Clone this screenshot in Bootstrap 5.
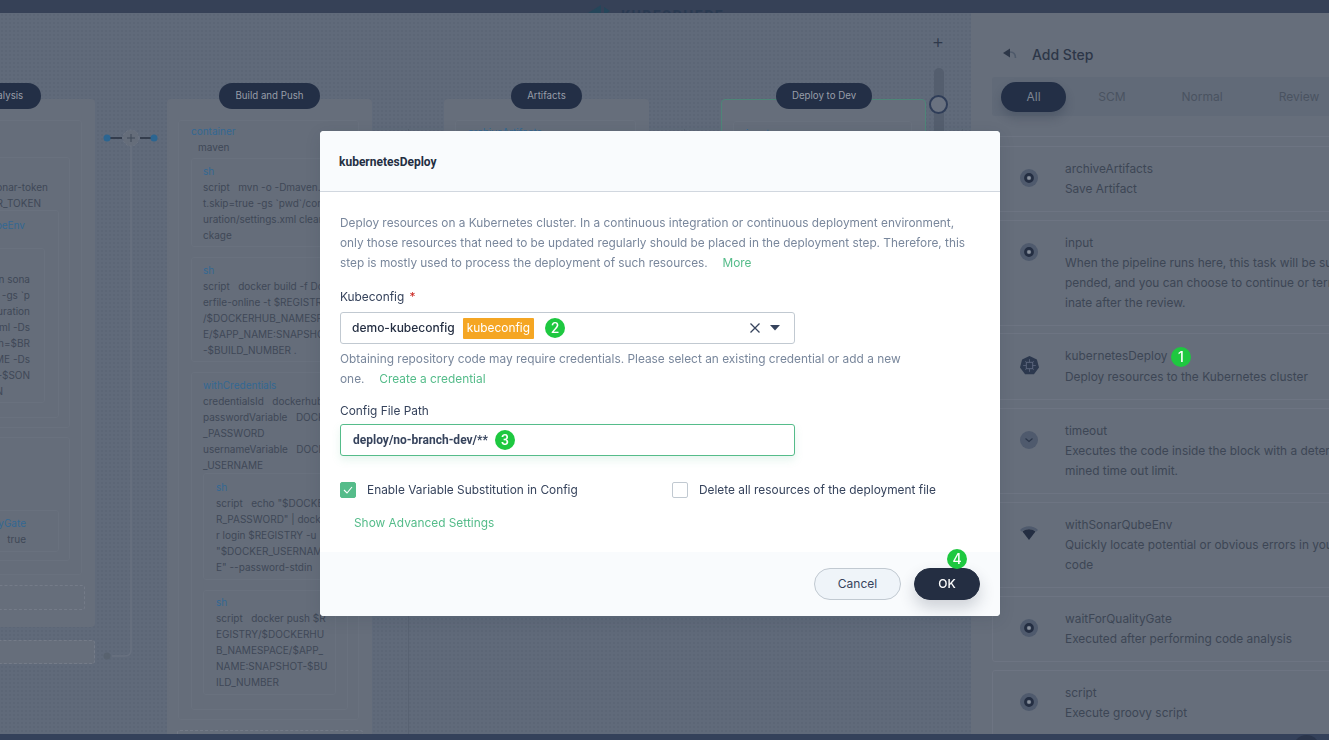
<!DOCTYPE html>
<html lang="en"><head><meta charset="utf-8"><title>kubernetesDeploy</title>
<link href="https://cdn.jsdelivr.net/npm/bootstrap@5.3.0/dist/css/bootstrap.min.css" rel="stylesheet">
<style>
html,body{height:100%;overflow:hidden}
body{font-family:Inter,Roboto,"Liberation Sans",sans-serif;font-size:11.88px;color:#36435c;background:#616b7a}
.app{height:740px}
.bar-top{height:13px;background:#364157;overflow:hidden;flex:none;gap:10px;padding-left:588px}
.bar-top svg{margin-top:5px;flex:none}
.logo-word{font-family:Roboto,sans-serif;font-size:14px;font-weight:700;letter-spacing:1.6px;line-height:16px;margin-top:8px;color:#293950}
.bar-bot{height:6px;background:#34415a;overflow:hidden;flex:none;padding-right:9px}
.bar-bot i{display:block;width:27px;height:27px;border-radius:50%;background:#2a354b;margin-top:1px}
.stage{flex:1 1 auto;min-height:0;overflow:hidden}
.canvas{width:971px;flex:none;background-color:#606a7a;background-image:radial-gradient(#5c6676 1px,transparent 1px);background-size:4px 4px}
.pipe{position:absolute;top:86px;width:205px}
.pipe-a{left:-110px}.pipe-b{left:167px}.pipe-c{left:444px}.pipe-d{left:721px}
.pipe-shell{background:#666e7b;border-radius:4px;padding:21px 13px 0 11px;font-size:10px;line-height:16px;color:#3f4857;white-space:nowrap}
.pipe-a .pipe-shell{height:528px}
.pipe-b .pipe-shell{height:700px}
.pipe-c .pipe-shell{height:400px}
.pipe-d .pipe-shell{height:400px;border:1px solid #4e8578}
.pill{position:absolute;top:-16px;height:26px;border-radius:13px;background:#232f46;color:#979da8;font-size:9.7px;line-height:26px;text-align:center}
.pipe-a .pill{right:54px;width:101px}
.pipe-b .pill{left:52px;width:101px}
.pipe-c .pill{left:67px;width:71px}
.pipe-d .pill{left:55px;width:96px}
.blk{background:#656d7a;border:1px solid #69717e;border-radius:3px}
.blue{color:#336893}
.ind{padding-left:7px}
.a1{height:455px;padding-top:36px;text-align:right}
.a2{height:271px;margin-right:11px;padding-top:21px}
.a-line{padding-right:21px}
.a-line-b{padding-right:28px}
.a3{height:208px;margin-top:-1px;margin-right:10px;padding-top:6px}
.a-line-c{padding-right:33px}
.a4{height:155px;margin-top:15px;margin-right:13px;padding:22px 14px 0 0}
.a-n{padding-right:27px}
.a2b{height:124px;margin-top:9px;margin-right:11px;padding-top:72px}
.a3b{height:42px;margin-right:10px;padding:4px 32px 0 0}
.dash{border:1px dashed #747b88;border-radius:3px}
.a-dash1{height:25px;margin-top:10px;margin-right:-3px}
.a-dash2{height:24px;margin-top:13px;background:#666e7b}
.b1{padding:2px 0 9px 12px;width:181px}
.b2{width:157px;padding:4px 0 3px 11px;margin-top:10px}
.b2-first{margin-top:3px}
.b2-last{padding-bottom:14px}
.b3{width:133px;padding:3px 0 4px 12px;margin-top:10px}
.b3-first{margin-top:0;padding:5px 0 4px 12px}
.b-dash{height:40px;margin-top:10px;margin-left:-1px;width:186px}
.inner-top{padding:3px 0 0 12px}
.wire{position:absolute;left:100px;top:112px}
.tick{position:absolute;top:116px;width:1px;background:#586272}
.tick-a{left:408px;height:620px}.tick-b{left:684px;height:14px}.tick-c{left:962px;height:14px}
.zoomer{position:absolute;left:928px;top:19px;width:20px}
.zoom-plus{font-size:19px;line-height:20px;text-align:center;color:#2f394b;font-weight:300}
.zoom-track{width:10px;height:90px;margin:16px 0 0 6px;background:#545e6e;border-radius:5px}
.zoom-knob{position:absolute;left:1px;top:63px;width:19px;height:19px;border-radius:50%;border:2px solid #2f3d58;background:#6a7280}
.side{width:500px;flex:none;background:#666e7b;padding-left:21px}
.side-head{height:64px;gap:15px;padding:32px 0 0 11px;font-size:14px;font-weight:500;line-height:20px;color:#2d3748}
.side-head svg{margin-top:3px}
.side-tabs{height:39px;background:#616a78;border-radius:3px;padding:5px 9px;align-items:center}
.side-tabs a{display:block;text-align:center;color:#4a5361;text-decoration:none;height:30px;line-height:30px;font-size:12px;padding:0}
.side-tabs a.active{background:#232f46;color:#7d8593;border-radius:15px;box-shadow:0 6px 10px rgba(36,46,66,.25)}
.tab-a{width:65px}.tab-b{width:92px}.tab-c{width:88px}.tab-d{width:106px}
.step-list{margin-top:10px;height:608px;overflow:hidden}
.step-stub{height:11px;border-bottom:1px solid #6d7482;margin-bottom:9px}
.step{background:transparent;border:1px solid #6d7482;border-radius:3px;margin-bottom:8px;padding:12px 0 12px 72px;line-height:20px;color:#3d4655;white-space:nowrap;--bs-card-border-color:#6d7482}
.step-snug{margin-bottom:7px}
.step .ico{position:absolute;left:27px;top:22px}
.num{display:inline-flex;align-items:center;justify-content:center;width:20px;height:20px;border-radius:50%;background:#1ec840;color:#fff;font-size:14px;font-weight:500;line-height:1;vertical-align:middle}
.num-top{position:relative;z-index:2}
.modal-host{position:absolute;inset:0 9px 0 0;padding:0;z-index:1}
.modal-veil{position:absolute;inset:0 -9px 0 0;backdrop-filter:blur(.6px)}
.dlg{width:680px;height:485px;border:0;border-radius:4px;overflow:visible;background:#fff;box-shadow:0 4px 16px rgba(36,46,66,.12)}
.dlg .modal-header{height:61px;padding:2px 19px 0;background:#f9fbfd;border-bottom:1px solid #d1d7df;border-radius:4px 4px 0 0}
.dlg .modal-title{font-family:Roboto,sans-serif;font-size:12px;font-weight:700;color:#242e42;line-height:20px}
.dlg .modal-body{padding:21px 20px 0;flex:none;height:360px}
.muted-txt{color:#79879c;line-height:20px;margin:0}
.intro-txt{font-size:11.83px}
.glink{color:#55bc8a;text-decoration:none}
.gap-link{margin-left:11.500px}
.fld-label{margin:14px 0 5px;line-height:20px;color:#36435c;display:block}
.fld-label b{color:#ca2621;font-weight:400;margin-left:2px}
.fld-second{margin:12px 0 3px}
.pick{width:455px;height:32px;border:1px solid #c1c9d1;border-radius:3px;padding:0 11px;background:#fff;color:#242e42;line-height:30px}
.pick-name{font-size:12px;font-weight:500}
.tag-o{background:#f5a623;color:#fff;padding:0 4px;line-height:20px;height:21px;font-weight:400;margin-left:8px;border-radius:1px}
.pick .num{margin-left:11px}
.pick-tools{margin-left:auto;gap:9px;padding-right:3px}
.fld-help{margin-top:5px}
.path-in{font-family:Roboto,sans-serif;font-size:12px;width:455px;height:32px;border:1px solid #55bc8a;border-radius:3px;padding:0 12px;font-weight:700;color:#36435c;line-height:30px;box-shadow:0 4px 8px rgba(85,188,138,.15);background:#fff}
.path-in .num{margin-left:7px}
.checks{margin-top:26px;height:16px;line-height:16px}
.cb{width:16px;height:16px;margin:0 11px 0 0;flex:none;border:1px solid #c1c9d1;border-radius:2px;background:#fff}
.cb-on{background:#55bc8a;border-color:#55bc8a}
.chk-one{width:332px;color:#36435c}
.adv{margin:15px 0 0 14px;line-height:20px}
.dlg .modal-footer{height:64px;padding:16px 20px;background:#f9fbfd;border:0;gap:13px;border-radius:0 0 4px 4px;flex-wrap:nowrap;position:relative}
.dlg .modal-footer>*{margin:0}
.bt-cancel,.bt-ok{height:32px;border-radius:16px;font-size:12px;line-height:30px;padding:0}
.bt-cancel{width:87px;background:#eff4f9;border:1px solid #c1c9d1;color:#36435c;font-weight:400}
.bt-ok{width:66px;background:#242e42;border:1px solid #242e42;color:#fff;font-weight:500;box-shadow:0 8px 16px rgba(36,46,66,.2)}
.ok-wrap{position:relative}
.ok-wrap .num{position:absolute;left:33px;top:-19px}
</style></head>
<body>
<div class="app d-flex flex-column">
  <div class="bar-top d-flex">
    <svg width="23" height="12" viewBox="0 0 23 12"><path fill="#25465a" d="M0 8 13 0v12H0z"/><path fill="#25465a" d="M16 2l6 4-6 4z"/></svg>
    <div class="logo-word">KUBESPHERE</div>
  </div>
  <div class="stage d-flex position-relative">
    <div class="canvas position-relative">
      <div class="pipe pipe-a">
        <div class="pill"><span>Code Analysis</span></div>
        <div class="pipe-shell">
          <div class="blk a1">
            <div class="blk a2">
              <div class="a-line">secretText sonar-token</div>
              <div class="a-line-b">SONAR_TOKEN</div>
              <div class="blk a3">
                <div class="blue a-line-c">withSonarQubeEnv</div>
                <div class="blk a4">
                  <div>mvn sona</div><div>-gs `p</div><div>uration</div><div>ml -Ds</div><div>h=$BR</div><div>ME -Ds</div><div>-$SON</div><div class="a-n">N</div>
                </div>
              </div>
            </div>
            <div class="blk a2b">
              <div class="blk a3b"><div class="blue">waitForQualityGate</div><div>true</div></div>
            </div>
          </div>
          <div class="dash a-dash1"></div>
        </div>
        <div class="dash a-dash2"></div>
      </div>
      <div class="pipe pipe-b">
        <div class="pill">Build and Push</div>
        <div class="pipe-shell">
          <div class="blk b1">
            <div class="blue">container</div>
            <div class="ind">maven</div>
            <div class="blk b2 b2-first">
              <div class="blue">sh</div>
              <div>script&#160;&#160; mvn -o -Dmaven.test</div><div>t.skip=true -gs `pwd`/config</div><div>uration/settings.xml clean pa</div><div>ckage</div>
            </div>
            <div class="blk b2">
              <div class="blue">sh</div>
              <div>script&#160;&#160; docker build -f Dock</div><div>erfile-online -t $REGISTRY</div><div>/$DOCKERHUB_NAMESPAC</div><div>E/$APP_NAME:SNAPSHOT</div><div>-$BUILD_NUMBER .</div>
            </div>
            <div class="blk b2 b2-last">
              <div class="blue">withCredentials</div>
              <div>credentialsId&#160;&#160; dockerhub-id</div><div>passwordVariable&#160;&#160; DOCKER</div><div>_PASSWORD</div><div>usernameVariable&#160;&#160; DOCKER</div><div>_USERNAME</div>
              <div class="blk b3 b3-first">
                <div class="blue">sh</div>
                <div>script&#160;&#160; echo "$DOCKE</div><div>R_PASSWORD" | docke</div><div>r login $REGISTRY -u</div><div>"$DOCKER_USERNAM</div><div>E" --password-stdin</div>
              </div>
              <div class="blk b3">
                <div class="blue">sh</div>
                <div>script&#160;&#160; docker push $R</div><div>EGISTRY/$DOCKERHU</div><div>B_NAMESPACE/$APP_</div><div>NAME:SNAPSHOT-$BU</div><div>ILD_NUMBER</div>
              </div>
            </div>
          </div>
          <div class="dash b-dash"></div>
        </div>
      </div>
      <div class="pipe pipe-c">
        <div class="pill">Artifacts</div>
        <div class="pipe-shell"><div class="blk inner-top"><div class="blue">archiveArtifacts</div></div></div>
      </div>
      <div class="pipe pipe-d">
        <div class="pill">Deploy to Dev</div>
        <div class="pipe-shell"><div class="blk inner-top"><div class="blue">input</div></div></div>
      </div>
      <svg class="wire" width="60" height="540" viewBox="0 0 60 540" fill="none">
        <path d="M31 21V525q0 6-6 6H12" stroke="#687180" stroke-width="1.5"/>
        <circle cx="7" cy="531" r="3.5" fill="#58626f"/>
        <path d="M7 13H22M40 13H54" stroke="#262f3f" stroke-width="1.5"/>
        <circle cx="31" cy="13" r="8" fill="#656d7a" stroke="#6f7785" stroke-dasharray="2 2"/>
        <path d="M27 13h8M31 9v8" stroke="#3f4857" stroke-width="1"/>
        <circle cx="7" cy="13" r="3.5" fill="#2b6591"/><circle cx="54" cy="13" r="3.5" fill="#2b6591"/>
      </svg>
      <i class="tick tick-a"></i><i class="tick tick-b"></i><i class="tick tick-c"></i>
      <div class="zoomer">
        <div class="zoom-plus">+</div>
        <div class="zoom-track"></div>
        <div class="zoom-knob"></div>
      </div>
    </div>
    <div class="side">
      <div class="side-head d-flex">
        <svg width="14" height="14" viewBox="0 0 14 14"><path fill="#2d3748" d="M0 5 7 0.500v9z"/><path fill="none" stroke="#4f5a6b" stroke-width="1.600" d="M7 4c3.500 0 5.500 2 5.500 6"/></svg>
        <div>Add Step</div>
      </div>
      <div class="side-tabs nav d-flex flex-nowrap">
        <a class="active tab-a" href="#">All</a><a class="tab-b" href="#">SCM</a><a class="tab-c" href="#">Normal</a><a class="tab-d" href="#">Review</a>
      </div>
      <div class="step-list">
        <div class="step-stub"></div>
        <div class="card step">
          <svg class="ico" width="18" height="18" viewBox="0 0 18 18"><circle cx="9" cy="9" r="9" fill="#4f5a6d"/><circle cx="9" cy="9" r="3.6" fill="none" stroke="#242e42" stroke-width="2.6"/><circle cx="9" cy="9" r="1.8" fill="#8a919c"/></svg>
          <div>archiveArtifacts</div><div>Save Artifact</div>
        </div>
        <div class="card step step-snug">
          <svg class="ico" width="18" height="18" viewBox="0 0 18 18"><circle cx="9" cy="9" r="9" fill="#4f5a6d"/><circle cx="9" cy="9" r="3.6" fill="none" stroke="#242e42" stroke-width="2.6"/><circle cx="9" cy="9" r="1.8" fill="#8a919c"/></svg>
          <div>input</div><div>When the pipeline runs here, this task will be sus</div><div>pended, and you can choose to continue or term</div><div>inate after the review.</div>
        </div>
        <div class="card step">
          <svg class="ico" width="19" height="19" viewBox="0 0 18 18"><path fill="#2c384e" d="M9 0l7 3.400 2 7.500-4.800 6.400H4.800L0 10.900l2-7.500z"/><rect x="6" y="6" width="6" height="6" fill="none" stroke="#59637a" stroke-width="1"/><path stroke="#59637a" stroke-width=".8" d="M9 3v3M9 12v3M3 9h3M12 9h3M5 5l1.500 1.500M13 5l-1.500 1.500M5 13l1.500-1.500M13 13l-1.500-1.500"/></svg>
          <div>kubernetesDeploy <span class="num num-top">1</span></div><div>Deploy resources to the Kubernetes cluster</div>
        </div>
        <div class="card step">
          <svg class="ico" width="18" height="18" viewBox="0 0 18 18"><circle cx="9" cy="9" r="9" fill="#4f5a6d"/><path d="M5.500 7.500 9 10.500l3.500-3" fill="none" stroke="#2c374b" stroke-width="1.200"/></svg>
          <div>timeout</div><div>Executes the code inside the block with a deter</div><div>mined time out limit.</div>
        </div>
        <div class="card step">
          <svg class="ico" width="18" height="18" viewBox="0 0 18 18"><path fill="#4f5a6d" d="M0 5C5 0 13 0 18 5l-1.500 1.600C12 3 6 3 1.500 6.600z"/><path fill="#242e42" d="M2.500 6.500c4-3 9-3 13 0L9 15z"/></svg>
          <div>withSonarQubeEnv</div><div>Quickly locate potential or obvious errors in your</div><div>code</div>
        </div>
        <div class="card step">
          <svg class="ico" width="18" height="18" viewBox="0 0 18 18"><circle cx="9" cy="9" r="9" fill="#4f5a6d"/><circle cx="9" cy="9" r="3.6" fill="none" stroke="#242e42" stroke-width="2.6"/><circle cx="9" cy="9" r="1.8" fill="#8a919c"/></svg>
          <div>waitForQualityGate</div><div>Executed after performing code analysis</div>
        </div>
        <div class="card step">
          <svg class="ico" width="18" height="18" viewBox="0 0 18 18"><circle cx="9" cy="9" r="9" fill="#4f5a6d"/><circle cx="9" cy="9" r="3.6" fill="none" stroke="#242e42" stroke-width="2.6"/><circle cx="9" cy="9" r="1.8" fill="#8a919c"/></svg>
          <div>script</div><div>Execute groovy script</div>
        </div>
      </div>
    </div>
    <div class="modal-host d-flex align-items-center justify-content-center">
      <div class="modal-veil"></div>
      <div class="modal-content dlg">
        <div class="modal-header"><div class="modal-title">kubernetesDeploy</div></div>
        <div class="modal-body">
          <p class="muted-txt intro-txt">Deploy resources on a Kubernetes cluster. In a continuous integration or continuous deployment environment,<br>only those resources that need to be updated regularly should be placed in the deployment step. Therefore, this<br>step is mostly used to process the deployment of such resources. <a class="glink gap-link" href="#">More</a></p>
          <label class="fld-label">Kubeconfig <b>*</b></label>
          <div class="pick d-flex align-items-center">
            <span class="pick-name">demo-kubeconfig</span><span class="tag-o">kubeconfig</span><span class="num">2</span>
            <span class="pick-tools d-flex align-items-center">
              <svg width="12" height="12" viewBox="0 0 12 12"><path d="M1.500 1.500l9 9M10.500 1.500l-9 9" stroke="#36435c" stroke-width="1.300"/></svg>
              <svg width="10" height="6" viewBox="0 0 10 6"><path d="M0 0h10L5 5.500z" fill="#36435c"/></svg>
            </span>
          </div>
          <p class="muted-txt fld-help">Obtaining repository code may require credentials. Please select an existing credential or add a new<br>one. <a class="glink gap-link" href="#">Create a credential</a></p>
          <label class="fld-label fld-second">Config File Path</label>
          <div class="path-in d-flex align-items-center">deploy/no-branch-dev/**<span class="num">3</span></div>
          <div class="checks d-flex">
            <div class="chk-one d-flex">
              <span class="cb cb-on d-flex align-items-center justify-content-center"><svg width="10" height="8" viewBox="0 0 10 8"><path d="M1 4l3 3 5-6" fill="none" stroke="#fff" stroke-width="1.100"/></svg></span>
              <span>Enable Variable Substitution in Config</span>
            </div>
            <div class="d-flex"><span class="cb"></span><span>Delete all resources of the deployment file</span></div>
          </div>
          <div class="adv"><a class="glink" href="#">Show Advanced Settings</a></div>
        </div>
        <div class="modal-footer">
          <button class="btn bt-cancel" type="button">Cancel</button>
          <div class="ok-wrap"><button class="btn bt-ok" type="button">OK</button><span class="num">4</span></div>
        </div>
      </div>
    </div>
  </div>
  <div class="bar-bot d-flex justify-content-end"><i></i></div>
</div>
<script src="https://cdn.jsdelivr.net/npm/bootstrap@5.3.0/dist/js/bootstrap.bundle.min.js"></script>
</body></html>
